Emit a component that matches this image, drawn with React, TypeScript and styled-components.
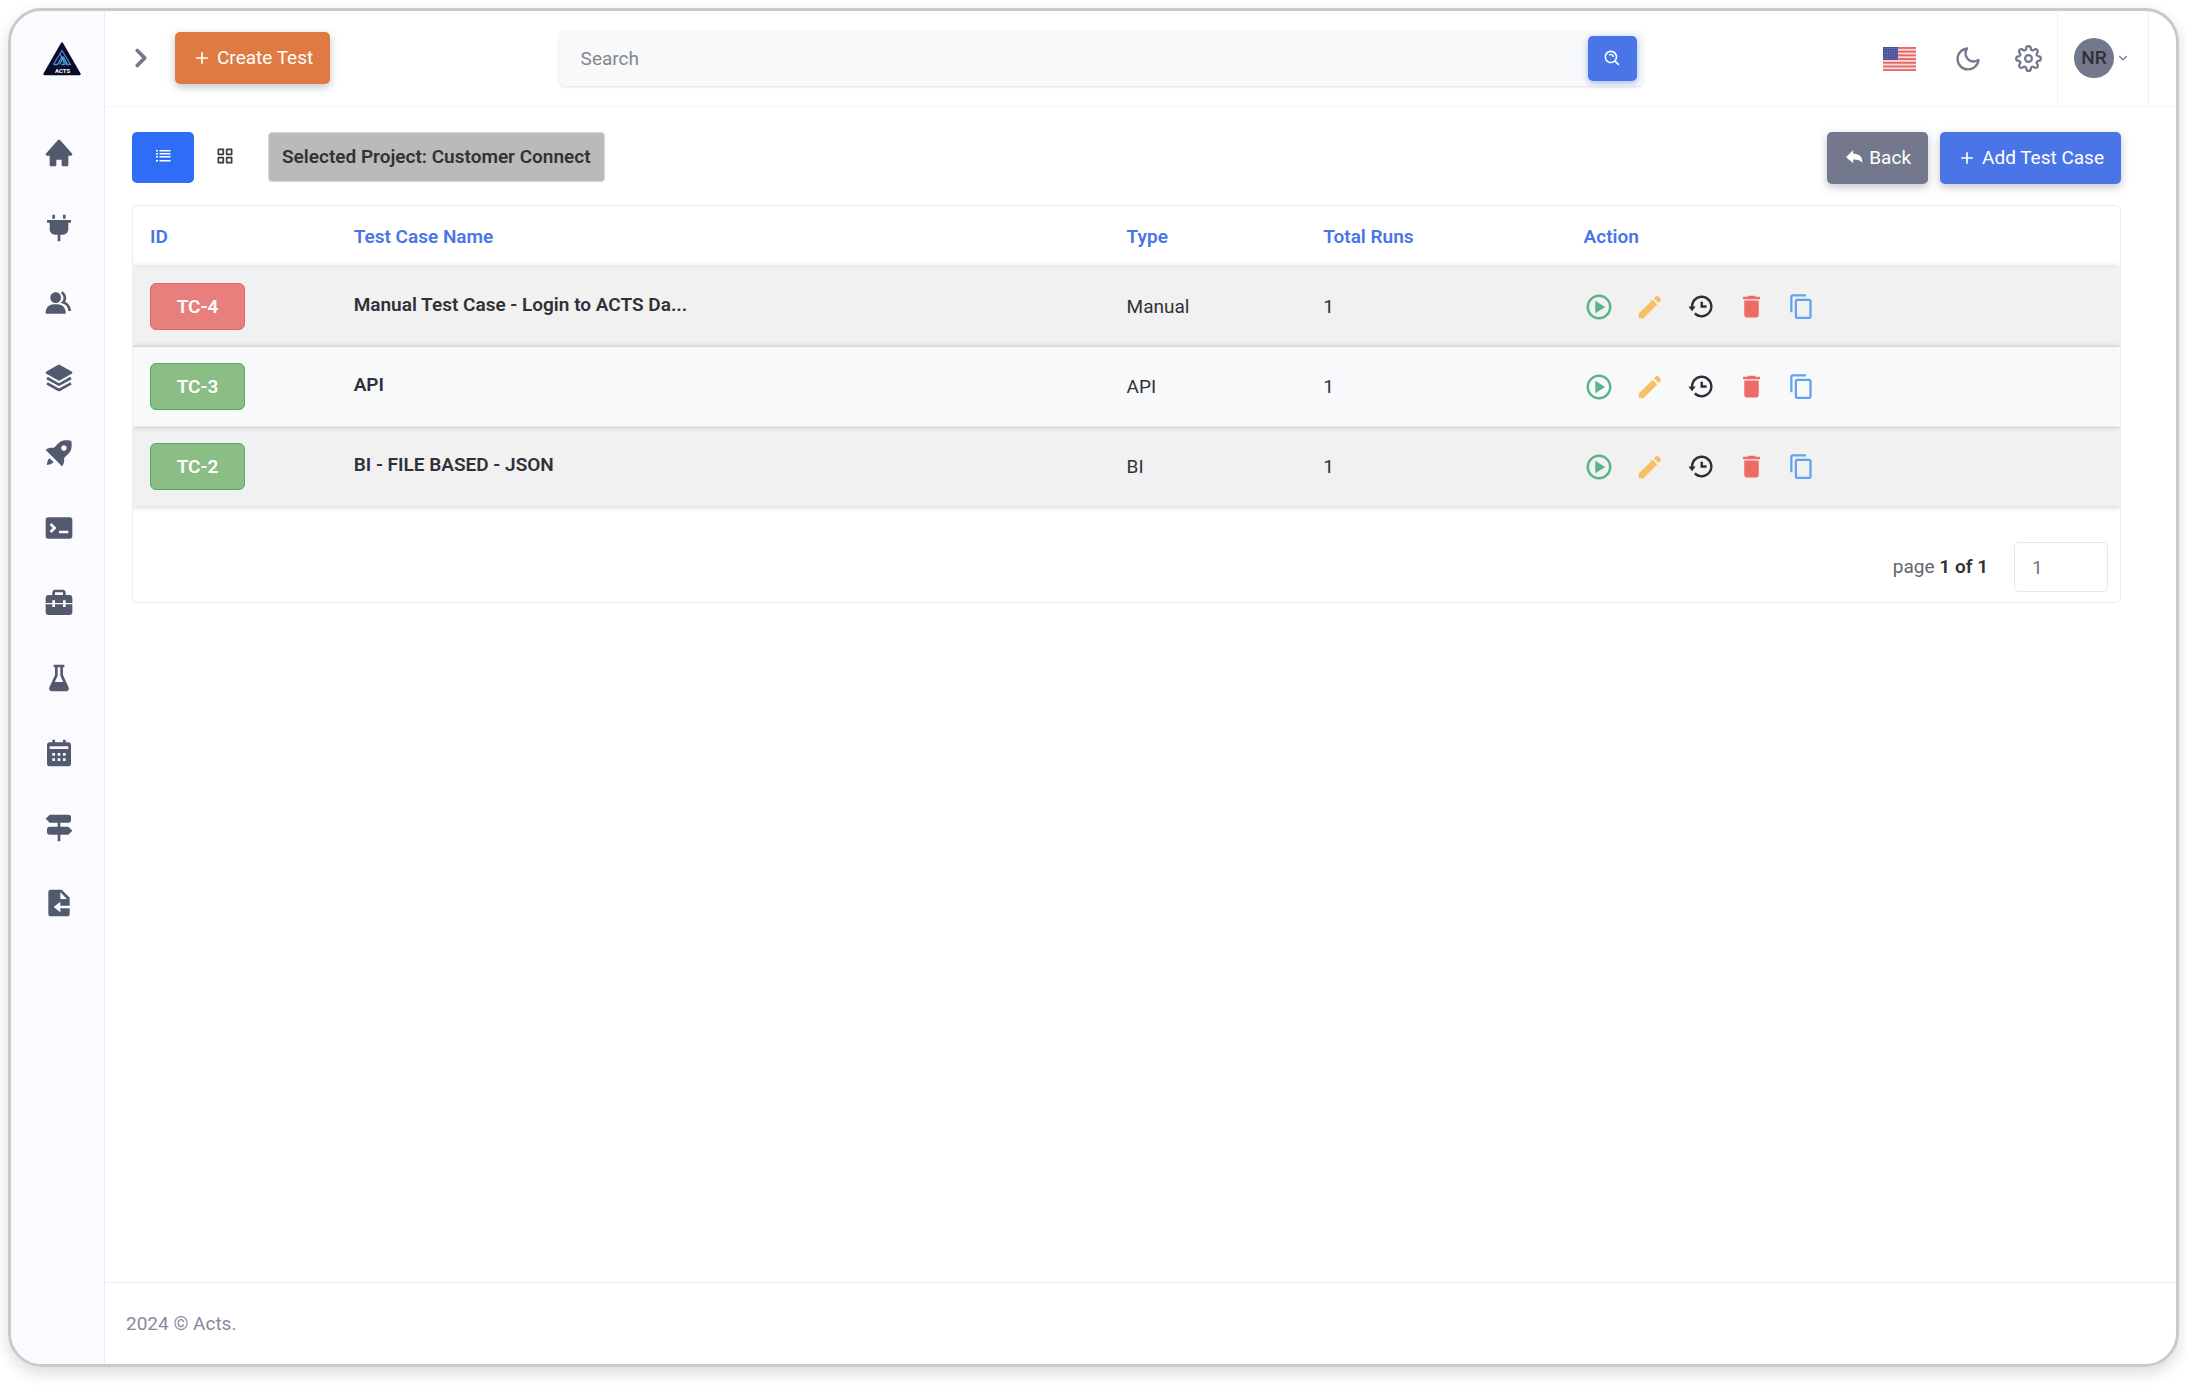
import React, { useState } from "react";
import styled, { createGlobalStyle, css } from "styled-components";
import {
  BiSolidHome,
  BiSolidPlug,
  BiSolidGroup,
  BiSolidLayer,
  BiSolidRocket,
  BiSolidTerminal,
  BiSolidBriefcaseAlt2,
  BiSolidFlask,
  BiSolidCalendar,
  BiSolidDirections,
  BiSolidFileImport,
  BiGridAlt,
  BiSearchAlt,
  BiHistory,
  BiSolidShare,
  BiPlayCircle,
} from "react-icons/bi";
import { MdAdd, MdContentCopy, MdDelete, MdEdit } from "react-icons/md";
import { FiChevronDown, FiChevronRight, FiMoon, FiSettings } from "react-icons/fi";

const GlobalStyle = createGlobalStyle`
  *, *::before, *::after { box-sizing: border-box; }
  body { margin: 0; background: #fff; }
  body, button, input { font-family: Roboto, "Liberation Sans", sans-serif; font-size: 19px; line-height: 28px; }
  svg { display: block; flex: none; }
`;

const Frame = styled.div`
  display: flex;
  min-height: calc(100vh - 30px);
  margin: 8px 7px 22px 8px;
  border: 3px solid #c9c9c9;
  border-radius: 34px;
  overflow: hidden;
  box-shadow: 0 6px 16px rgba(0, 0, 0, 0.14);
  color: #2f3136;
`;

const Sidebar = styled.nav`
  flex: none;
  width: 94px;
  background: #fafaff;
  border-right: 1px solid #e9ebf2;
`;

const LogoLink = styled.a`
  display: flex;
  justify-content: center;
  padding: 31px 0 0 8px;
`;

const NavList = styled.ul`
  display: flex;
  flex-direction: column;
  gap: 43px;
  margin: 0;
  padding: 61px 0 40px 2px;
  list-style: none;
`;

const NavLink = styled.a`
  display: flex;
  justify-content: center;
  color: #545a6d;
`;

const Main = styled.div`
  flex: 1;
  min-width: 0;
  display: flex;
  flex-direction: column;
`;

const Header = styled.header`
  display: flex;
  justify-content: space-between;
  align-items: stretch;
  height: 96px;
  padding: 0 27px 0 21px;
  border-bottom: 1px solid #f6f6f8;
`;

const HeaderGroup = styled.div`
  display: flex;
  align-items: center;
  gap: 21px;
  padding-bottom: 2px;
`;

const UserGroup = styled.div`
  display: flex;
`;

const IconButton = styled.button`
  display: grid;
  place-items: center;
  width: 28px;
  height: 40px;
  padding: 0;
  border: 0;
  background: none;
  color: #74788d;
  cursor: pointer;
`;

const LanguageButton = styled(IconButton)`
  width: 45px;
`;

type Tone = "orange" | "gray" | "blue";
const tones: Record<Tone, string> = { orange: "#df7b42", gray: "#74788d", blue: "#4a75e6" };

const Button = styled.button<{ $tone: Tone }>`
  display: inline-flex;
  align-items: center;
  gap: 5px;
  height: 52px;
  padding: 0 17px;
  border: 0;
  border-radius: 5px;
  background: ${(p) => tones[p.$tone]};
  color: #fff;
  white-space: nowrap;
  box-shadow: 0 3px 8px rgba(80, 84, 110, 0.35);
  cursor: pointer;
`;

const SearchForm = styled.form`
  display: flex;
  align-items: center;
  flex: 0 1 1084px;
  height: 55px;
  margin: 20px 6px 0 0;
  padding: 0 6px 0 22px;
  border-radius: 5px;
  background: #f7f9fb;
  box-shadow: 0 1px 3px rgba(0, 0, 0, 0.12);
`;

const SearchInput = styled.input`
  flex: 1;
  min-width: 0;
  padding: 0;
  border: 0;
  outline: 0;
  background: none;
  color: #495057;
  &::placeholder { color: #85878b; opacity: 1; }
`;

const SearchButton = styled.button`
  display: grid;
  place-items: center;
  width: 49px;
  height: 45px;
  padding: 0;
  border: 0;
  border-radius: 5px;
  background: #4a75e6;
  color: #fff;
  box-shadow: 0 2px 6px rgba(74, 117, 230, 0.5);
  cursor: pointer;
`;

const Tools = styled.div`
  display: flex;
  align-items: center;
  gap: 32px;
  padding-right: 15px;
`;

const Profile = styled.button`
  display: flex;
  align-items: center;
  gap: 2px;
  padding: 0 18px 2px 16px;
  border: solid #eeeff3;
  border-width: 0 1px;
  background: none;
  color: #74788d;
  cursor: pointer;
`;

const Avatar = styled.span`
  display: grid;
  place-items: center;
  width: 40px;
  height: 40px;
  border-radius: 50%;
  background: #74788d;
  color: #2f3136;
  font-weight: 500;
`;

const Content = styled.main`
  flex: 1;
  padding: 25px 55px 25px 27px;
`;

const Toolbar = styled.div`
  display: flex;
  align-items: flex-start;
  gap: 12px;
  margin-bottom: 21px;
`;

const ViewTab = styled.button<{ $active?: boolean }>`
  display: grid;
  place-items: center;
  width: 62px;
  height: 51px;
  padding: 0 0 4px;
  border: 0;
  border-radius: 5px;
  background: ${(p) => (p.$active ? "#306df6" : "transparent")};
  color: ${(p) => (p.$active ? "#fff" : "#3b3a36")};
  cursor: pointer;
`;

const Tabs = styled.div`
  display: flex;
`;

const ProjectTag = styled.strong`
  margin-right: auto;
  padding: 10px 13px;
  border: 1px solid #d6d6da;
  border-radius: 4px;
  background: #bababa;
  color: #303236;
  font-weight: 600;
`;

const Card = styled.section`
  border: 1px solid #ececf1;
  border-radius: 5px;
  overflow: hidden;
`;

const Table = styled.table`
  width: 100%;
  border-spacing: 0;
  table-layout: fixed;
`;

const Col = styled.col<{ $share: number }>`
  width: ${(p) => p.$share}%;
`;

const HeadCell = styled.th`
  height: 61px;
  padding: 0 17px;
  color: #4a75e6;
  font-weight: 600;
  text-align: left;
`;

const Row = styled.tr<{ $raised: boolean }>`
  position: relative;
  background: #f1f1f1;
  box-shadow: 0 0 6px rgba(0, 0, 0, 0.2);
  ${(p) =>
    p.$raised &&
    css`
      z-index: 1;
      background: #f8f9fb;
    `}
`;

const Cell = styled.td`
  height: 80px;
  padding: 0 17px;
  border-bottom: 1px solid #e6e8ed;
`;

const CaseName = styled.span`
  display: block;
  padding-bottom: 4px;
  font-weight: 600;
  white-space: nowrap;
`;

const Badge = styled.button<{ $failed: boolean }>`
  display: block;
  width: 95px;
  height: 47px;
  padding: 0;
  border: 1px solid ${(p) => (p.$failed ? "#dc6a72" : "#4fab68")};
  border-radius: 6px;
  background: ${(p) => (p.$failed ? "#e97f7d" : "#8abe84")};
  color: #fff;
  font-weight: 600;
  cursor: pointer;
`;

const Actions = styled.div`
  display: flex;
  align-items: center;
  gap: 23px;
`;

const ActionButton = styled(IconButton)<{ $color: string }>`
  color: ${(p) => p.$color};
`;

const Pager = styled.div`
  display: flex;
  align-items: center;
  justify-content: flex-end;
  gap: 26px;
  padding: 35px 12px 10px;
  color: #62656b;
`;

const PageCount = styled.strong`
  color: #2f3136;
  font-weight: 600;
`;

const PageInput = styled.input`
  width: 94px;
  height: 50px;
  padding: 0 17px;
  border: 1px solid #e6e8ef;
  border-radius: 5px;
  background: #fff;
  color: #74767a;
`;

const Footer = styled.footer`
  display: flex;
  align-items: center;
  height: 82px;
  padding: 0 21px;
  border-top: 1px solid #ebecef;
  color: #858a9c;
`;

const Logo = () => (
  <svg width="38" height="34" viewBox="0 0 38 34" role="img" aria-label="ACTS">
    <path d="M19 1.5 36.5 32h-35Z" fill="#0a0a2b" stroke="#0a0a2b" strokeWidth="2.4" strokeLinejoin="round" />
    <g fill="none" strokeWidth="1.3" strokeLinejoin="round">
      <path d="M10.5 22.5 19 8.5l8.5 14h-4L16.5 11.5" stroke="#4d7fd6" />
      <path d="M10.5 22.5h4l4.500-8 2.500 8h-3" stroke="#3fa0c4" />
      <path d="M16.5 22.5 20.5 15l4 7.5" stroke="#4aa9c9" />
    </g>
    <text x="19.5" y="30.5" fill="#fff" fontSize="6" fontWeight="700" textAnchor="middle" fontFamily="Roboto, sans-serif">
      ACTS
    </text>
  </svg>
);

const ListIcon = () => (
  <svg width="15" height="12" viewBox="0 0 15 12" fill="currentColor" aria-hidden="true">
    {[0, 3, 6, 10].map((y) => (
      <React.Fragment key={y}>
        <rect x="0" y={y} width="2" height="1.5" />
        <rect x="3.5" y={y} width="11" height="1.5" />
      </React.Fragment>
    ))}
  </svg>
);

const Flag = () => (
  <svg width="33" height="24" viewBox="0 0 33 24" role="img" aria-label="English (US)">
    <rect width="33" height="24" fill="#f7dcdc" />
    {[0, 3.7, 7.4, 11.1, 14.8, 18.5, 22.2].map((y) => (
      <rect key={y} y={y} width="33" height="1.9" fill="#ea6666" />
    ))}
    <rect width="15" height="13" fill="#4a4f9c" />
    {[1.5, 4, 6.5, 9, 11.5].map((y) => (
      <path key={y} d={`M1.5 ${y}h13`} stroke="#8d90c6" strokeWidth="1" strokeDasharray="1 1.4" />
    ))}
  </svg>
);

const navItems = [
  { label: "Home", Icon: BiSolidHome },
  { label: "Integrations", Icon: BiSolidPlug },
  { label: "Users", Icon: BiSolidGroup },
  { label: "Projects", Icon: BiSolidLayer },
  { label: "Releases", Icon: BiSolidRocket },
  { label: "Terminal", Icon: BiSolidTerminal },
  { label: "Toolbox", Icon: BiSolidBriefcaseAlt2 },
  { label: "Lab", Icon: BiSolidFlask },
  { label: "Calendar", Icon: BiSolidCalendar },
  { label: "Directions", Icon: BiSolidDirections },
  { label: "Import", Icon: BiSolidFileImport },
];

const columns = [
  { title: "ID", share: 10.25 },
  { title: "Test Case Name", share: 38.9 },
  { title: "Type", share: 9.9 },
  { title: "Total Runs", share: 13.1 },
  { title: "Action", share: 27.85 },
];

const cases = [
  { id: "TC-4", name: "Manual Test Case - Login to ACTS Da...", type: "Manual", runs: 1, failed: true },
  { id: "TC-3", name: "API", type: "API", runs: 1, failed: false },
  { id: "TC-2", name: "BI - FILE BASED - JSON", type: "BI", runs: 1, failed: false },
];

const actions = [
  { label: "Run", color: "#5cb588", Icon: BiPlayCircle, size: 30 },
  { label: "Edit", color: "#f7c163", Icon: MdEdit, size: 30 },
  { label: "History", color: "#2c2e33", Icon: BiHistory, size: 29 },
  { label: "Delete", color: "#ed6b65", Icon: MdDelete, size: 29 },
  { label: "Copy", color: "#62a3ee", Icon: MdContentCopy, size: 27 },
];

export default function App() {
  const [query, setQuery] = useState("");
  const [page, setPage] = useState("1");

  return (
    <>
      <GlobalStyle />
      <Frame>
        <Sidebar aria-label="Main">
          <LogoLink href="#">
            <Logo />
          </LogoLink>
          <NavList>
            {navItems.map(({ label, Icon }) => (
              <li key={label}>
                <NavLink href="#" aria-label={label}>
                  <Icon size={32} />
                </NavLink>
              </li>
            ))}
          </NavList>
        </Sidebar>
        <Main>
          <Header>
            <HeaderGroup>
              <IconButton aria-label="Expand menu">
                <FiChevronRight size={30} strokeWidth={3} />
              </IconButton>
              <Button $tone="orange">
                <MdAdd size={20} />
                Create Test
              </Button>
            </HeaderGroup>
            <SearchForm role="search" onSubmit={(e) => e.preventDefault()}>
              <SearchInput
                aria-label="Search"
                placeholder="Search"
                value={query}
                onChange={(e) => setQuery(e.target.value)}
              />
              <SearchButton aria-label="Submit search">
                <BiSearchAlt size={19} />
              </SearchButton>
            </SearchForm>
            <UserGroup>
              <Tools>
                <LanguageButton aria-label="Language">
                  <Flag />
                </LanguageButton>
                <IconButton aria-label="Dark mode">
                  <FiMoon size={28} strokeWidth={2} />
                </IconButton>
                <IconButton aria-label="Settings">
                  <FiSettings size={27} strokeWidth={2} />
                </IconButton>
              </Tools>
              <Profile aria-label="Account">
                <Avatar>NR</Avatar>
                <FiChevronDown size={14} />
              </Profile>
            </UserGroup>
          </Header>
          <Content>
            <Toolbar>
              <Tabs>
                <ViewTab $active aria-label="List view">
                  <ListIcon />
                </ViewTab>
                <ViewTab aria-label="Grid view">
                  <BiGridAlt size={20} />
                </ViewTab>
              </Tabs>
              <ProjectTag>Selected Project: Customer Connect</ProjectTag>
              <Button $tone="gray">
                <BiSolidShare size={20} />
                Back
              </Button>
              <Button $tone="blue">
                <MdAdd size={20} />
                Add Test Case
              </Button>
            </Toolbar>
            <Card>
              <Table>
                <colgroup>
                  {columns.map((c) => (
                    <Col key={c.title} $share={c.share} />
                  ))}
                </colgroup>
                <thead>
                  <tr>
                    {columns.map((c) => (
                      <HeadCell key={c.title} scope="col">
                        {c.title}
                      </HeadCell>
                    ))}
                  </tr>
                </thead>
                <tbody>
                  {cases.map((c, i) => (
                    <Row key={c.id} $raised={i % 2 === 1}>
                      <Cell>
                        <Badge $failed={c.failed}>{c.id}</Badge>
                      </Cell>
                      <Cell>
                        <CaseName>{c.name}</CaseName>
                      </Cell>
                      <Cell>{c.type}</Cell>
                      <Cell>{c.runs}</Cell>
                      <Cell>
                        <Actions>
                          {actions.map(({ label, color, Icon, size }) => (
                            <ActionButton key={label} $color={color} aria-label={`${label} ${c.id}`}>
                              <Icon size={size} />
                            </ActionButton>
                          ))}
                        </Actions>
                      </Cell>
                    </Row>
                  ))}
                </tbody>
              </Table>
              <Pager>
                <span>
                  page <PageCount>{page || 1} of 1</PageCount>
                </span>
                <PageInput aria-label="Page number" value={page} onChange={(e) => setPage(e.target.value)} />
              </Pager>
            </Card>
          </Content>
          <Footer>2024 © Acts.</Footer>
        </Main>
      </Frame>
    </>
  );
}
